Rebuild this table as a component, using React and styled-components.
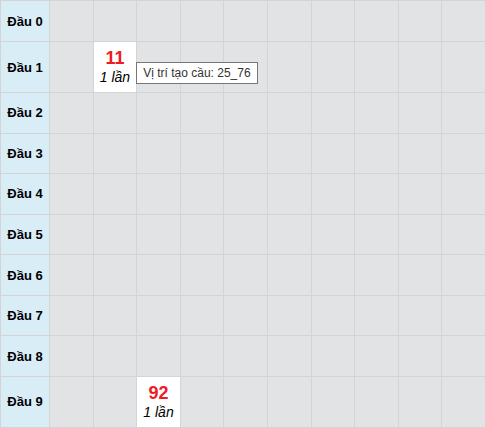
import React from "react";
import styled, { createGlobalStyle } from "styled-components";

const GlobalStyle = createGlobalStyle`
  html, body { margin: 0; padding: 0; background: #ffffff; }
  body { font-family: "Liberation Sans", Arial, sans-serif; }
`;

const Board = styled.div`
  width: 485px;
  display: grid;
  grid-template-columns: 48px repeat(10, 1fr);
  grid-template-rows: 40px 50px repeat(7, 39.57px) 50px;
  gap: 1px;
  padding: 1px 0 1px 1px;
  box-sizing: border-box;
  background: #d3d4d6;
  overflow: hidden;
`;

const HeadCell = styled.div`
  background: #d9edf7;
  display: flex;
  align-items: center;
  justify-content: center;
  font-weight: bold;
  font-size: 13px;
  color: #000;
  white-space: nowrap;
`;

const Cell = styled.div`
  position: relative;
  background: ${(p) => (p.$filled ? "#ffffff" : "#e2e3e5")};
  display: flex;
  flex-direction: column;
  align-items: center;
  justify-content: center;
`;

const Num = styled.div`
  color: #ed1c24;
  font-weight: bold;
  font-size: 18px;
  line-height: 21px;
`;

const Count = styled.div`
  font-style: italic;
  font-size: 14px;
  line-height: 17px;
  color: #000;
`;

const Tip = styled.div`
  position: absolute;
  left: 100%;
  top: 20px;
  z-index: 2;
  background: #ffffff;
  border: 1px solid #767676;
  padding: 3px 6px;
  font-size: 12px;
  line-height: 14px;
  color: #333333;
  white-space: nowrap;
`;

const data = {
  1: { col: 1, num: "11", count: "1 lần", tip: "Vị trí tạo cầu: 25_76" },
  9: { col: 2, num: "92", count: "1 lần" },
};

export default function App() {
  const rows = Array.from({ length: 10 }, (_, r) => r);
  const cols = Array.from({ length: 10 }, (_, c) => c);
  return (
    <>
      <GlobalStyle />
      <Board>
        {rows.map((r) => (
          <React.Fragment key={r}>
            <HeadCell>Đầu {r}</HeadCell>
            {cols.map((c) => {
              const d = data[r] && data[r].col === c ? data[r] : null;
              return (
                <Cell key={c} $filled={!!d}>
                  {d && (
                    <>
                      <Num>{d.num}</Num>
                      <Count>{d.count}</Count>
                      {d.tip && <Tip>{d.tip}</Tip>}
                    </>
                  )}
                </Cell>
              );
            })}
          </React.Fragment>
        ))}
      </Board>
    </>
  );
}
